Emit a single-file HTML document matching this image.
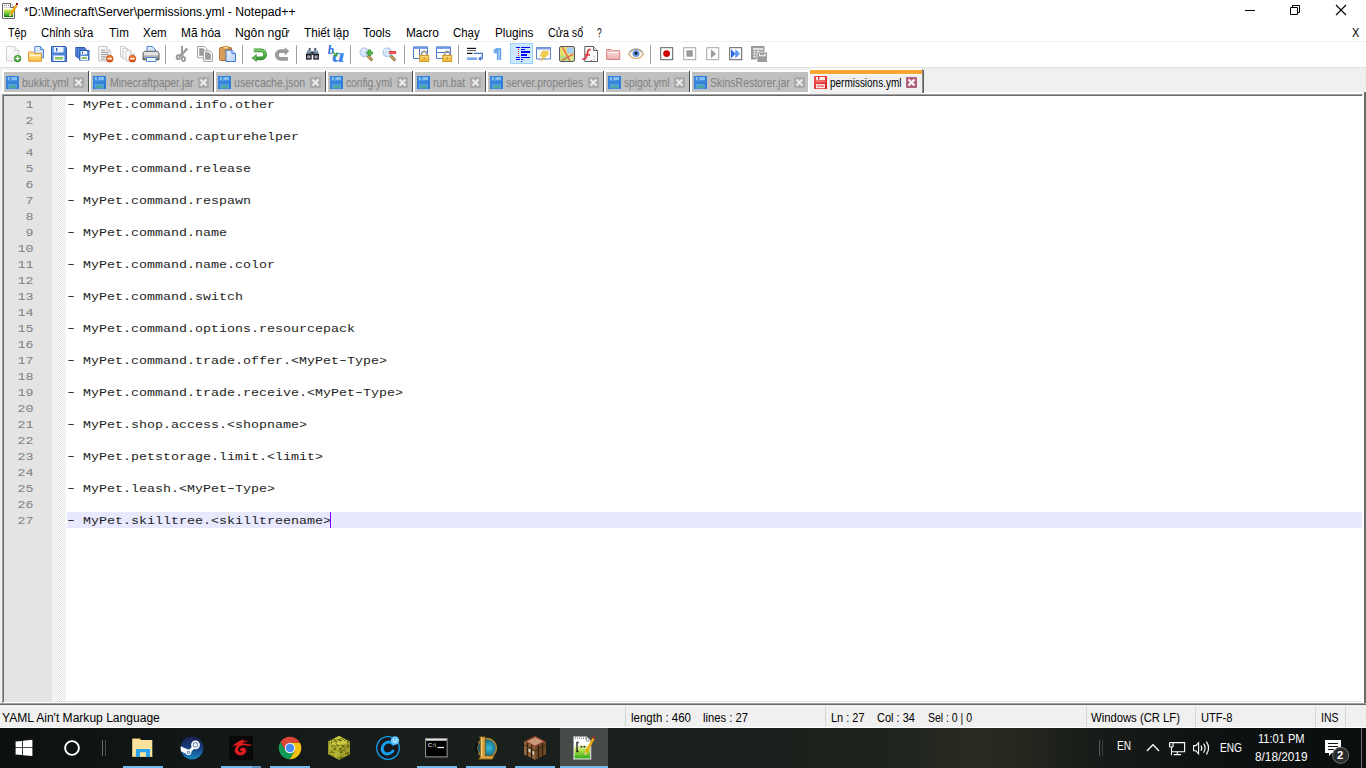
<!DOCTYPE html>
<html lang="vi"><head><meta charset="utf-8"><title>permissions.yml - Notepad++</title>
<style>
html,body{margin:0;padding:0}
body{width:1366px;height:768px;position:relative;overflow:hidden;background:#fff;font:12px "Liberation Sans",sans-serif}
.a{position:absolute}
.tx{position:absolute;white-space:pre;line-height:normal;transform-origin:0 0;display:block}
svg{position:absolute;overflow:visible}
.ln{position:absolute;left:4px;width:29.5px;text-align:right;font:13.33px "Liberation Mono",monospace;color:#808080;height:16px;line-height:16px;white-space:pre;transform:translateY(1px) scaleY(.88);transform-origin:0 11px}
.cl{position:absolute;left:67px;font:13.33px "Liberation Mono",monospace;color:#1e1e1e;height:16px;line-height:16px;white-space:pre;transform:translateY(1px) scaleY(.88);transform-origin:0 11px}
.hy{display:inline-block;transform:translateY(-.6px) scaleX(1.5)}
</style></head><body>
<svg style="left:0px;top:0px" width="20" height="20" viewBox="0 0 20 20"><defs><linearGradient id="tg" x1="0" y1="0" x2="0" y2="1"><stop offset="0" stop-color="#e4f05a"/><stop offset=".6" stop-color="#5cc030"/><stop offset=".85" stop-color="#2a9a1a"/><stop offset="1" stop-color="#0a5a0a"/></linearGradient></defs><path d="M2.500 3.500h8l4 4v11h-12z" fill="#fff" stroke="#666" stroke-width="1"/><path d="M10.500 3.500v4h4" fill="#f4f4f4" stroke="#666"/><path d="M4 5.500h1M6 5.500h1M8 5.500h1" stroke="#777" stroke-width="1"/><path d="M4 7.500h6" stroke="#c9d9ea"/><rect x="4" y="9.300" width="9.200" height="7.700" fill="url(#tg)"/><path d="M16.500 5.500l-6.300 9.500" stroke="#f1a500" stroke-width="2.300"/><path d="M10.900 13.900l-1.400 2.100" stroke="#e9c79a" stroke-width="2"/><path d="M16.200 4.200l1.100 .8" stroke="#8a9ab8" stroke-width="2.200"/><rect x="16" y="3" width="2" height="1.900" fill="#9a0000"/></svg>
<svg style="left:1240px;top:0" width="126" height="22" viewBox="0 0 126 22"><path d="M5 10.5h10" stroke="#000" stroke-width="1" fill="none"/><path d="M50.5 7.500h7v7h-7zM52.500 7.500v-2h7v7h-2" stroke="#000" stroke-width="1" fill="none"/><path d="M96 5l10 10M106 5l-10 10" stroke="#000" stroke-width="1.1" fill="none"/></svg>
<div class="a" style="left:0px;top:41px;width:1366px;height:1px;background:#f0f0f0;"></div>
<div class="a" style="left:0px;top:67px;width:1366px;height:1px;background:#e1e1e1;"></div>
<div class="a" style="left:0px;top:68px;width:1366px;height:25px;background:#f0f0f0;"></div>
<svg width="0" height="0" style="left:0;top:0"><defs><linearGradient id="gpg" x1="0" y1="0" x2="1" y2="1"><stop offset="0" stop-color="#fff"/><stop offset="1" stop-color="#ececec"/></linearGradient><linearGradient id="gfo" x1="0" y1="0" x2="0" y2="1"><stop offset="0" stop-color="#fdedb4"/><stop offset="1" stop-color="#f8c445"/></linearGradient><linearGradient id="gdoc" x1="0" y1="0" x2="1" y2="1"><stop offset="0" stop-color="#eaf2fe"/><stop offset="1" stop-color="#b9d0f5"/></linearGradient><linearGradient id="gsv" x1="0" y1="0" x2="1" y2="1"><stop offset="0" stop-color="#78a6ec"/><stop offset="1" stop-color="#3f72cc"/></linearGradient><linearGradient id="ggr" x1="0" y1="0" x2="0" y2="1"><stop offset="0" stop-color="#6cc24e"/><stop offset="1" stop-color="#2f8a22"/></linearGradient><linearGradient id="gor" x1="0" y1="0" x2="0" y2="1"><stop offset="0" stop-color="#f58a3a"/><stop offset="1" stop-color="#dc4a10"/></linearGradient><linearGradient id="gpr" x1="0" y1="0" x2="0" y2="1"><stop offset="0" stop-color="#f2f2f2"/><stop offset=".55" stop-color="#bdbdbd"/><stop offset="1" stop-color="#6a6a6a"/></linearGradient><linearGradient id="gcl" x1="0" y1="0" x2="1" y2="0"><stop offset="0" stop-color="#e2a866"/><stop offset="1" stop-color="#c98238"/></linearGradient><linearGradient id="gun" x1="0" y1="0" x2="0" y2="1"><stop offset="0" stop-color="#7acb6a"/><stop offset="1" stop-color="#3f9a38"/></linearGradient><linearGradient id="glk" x1="0" y1="0" x2="0" y2="1"><stop offset="0" stop-color="#fbdc7c"/><stop offset="1" stop-color="#eeb030"/></linearGradient><linearGradient id="gfw" x1="0" y1="0" x2="0" y2="1"><stop offset="0" stop-color="#fbe4e4"/><stop offset="1" stop-color="#eeb0b0"/></linearGradient><linearGradient id="gbl" x1="0" y1="0" x2="1" y2="0"><stop offset="0" stop-color="#1f5fe0"/><stop offset="1" stop-color="#7fb0f8"/></linearGradient></defs></svg>
<svg style="left:5px;top:46px" width="16" height="16" viewBox="0 0 16 16"><path d="M1.5 0.5h8.5l4 4v10.5h-12.5z" fill="url(#gpg)" stroke="#d2d2d2"/><path d="M10.0 0.5v4h4" fill="#f4f4f4" stroke="#d2d2d2" stroke-linejoin="round"/><circle cx="12.600" cy="12.600" r="3.300" fill="url(#ggr)" stroke="#2d7d22" stroke-width=".7"/><path d="M10.600 12.600h4M12.600 10.600v4" stroke="#fff" stroke-width="1.400"/></svg>
<svg style="left:28px;top:46px" width="16" height="16" viewBox="0 0 16 16"><path d="M6.800 .5h5.700l3 3v8.500h-8.700z" fill="url(#gdoc)" stroke="#4f84d4"/><path d="M12.500 .5v3h3" fill="#dbe8fb" stroke="#4f84d4" stroke-linejoin="round"/><path d="M.7 15.200v-9.200h4.800l1 1.500h7v7.700z" fill="url(#gfo)" stroke="#e4922a"/><path d="M1.500 9.500h11.500" stroke="#fff6d6" opacity=".9"/></svg>
<svg style="left:51px;top:46px" width="16" height="16" viewBox="0 0 16 16"><path d="M.5 .5h14l1 1v14h-15z" fill="url(#gsv)" stroke="#2d5cb4"/><rect x="3" y="1" width="9.500" height="5.500" fill="#eef4fd"/><rect x="5" y="2" width="1.300" height="3.300" fill="#2d5cb4"/><rect x="1" y="6.800" width="14" height="2.200" fill="#4a7fd6" opacity=".7"/><rect x="2.500" y="9.500" width="11" height="5.500" fill="#f3f7fd"/><rect x="4" y="11" width="8" height="2.500" fill="#7cc04e"/><path d="M4 12.200h8" stroke="#a6d986" stroke-width=".6"/></svg>
<svg style="left:74px;top:46px" width="16" height="16" viewBox="0 0 16 16"><rect x="1.8" y="1.5" width="8.7" height="8.7" fill="url(#gsv)" stroke="#2f5fb5"/><rect x="3.3" y="3.0" width="8.7" height="8.7" fill="url(#gsv)" stroke="#2f5fb5"/><rect x="5.5" y="4.5" width="9.5" height="9.5" fill="url(#gsv)" stroke="#2f5fb5"/><rect x="7" y="5" width="6" height="3.400" fill="#eef4fd"/><rect x="8" y="5.500" width="1" height="2.200" fill="#2d5cb4"/><rect x="6.500" y="10" width="7.500" height="4" fill="#f3f7fd"/><rect x="7.800" y="11.200" width="5" height="1.800" fill="#7cc04e"/></svg>
<svg style="left:97px;top:46px" width="16" height="16" viewBox="0 0 16 16"><path d="M1.7 0.5h8l4 4v10.5h-12z" fill="url(#gpg)" stroke="#c4c4c4"/><path d="M9.7 0.5v4h4" fill="#f4f4f4" stroke="#c4c4c4" stroke-linejoin="round"/><path d="M4 4.200h4M4 6.400h7.500M4 8.600h7.500M4 10.800h5M4 13h4" stroke="#8a8a8a" stroke-width=".9"/><circle cx="12.7" cy="12.7" r="3.400" fill="url(#gor)" stroke="#c2440e" stroke-width=".7"/><path d="M10.5 12.7h4.400" stroke="#fff" stroke-width="1.500"/></svg>
<svg style="left:120px;top:46px" width="16" height="16" viewBox="0 0 16 16"><path d="M0.5 0.5h4.5l4 4v6.5h-8.5z" fill="url(#gpg)" stroke="#cdcdcd"/><path d="M5.0 0.5v4h4" fill="#f4f4f4" stroke="#cdcdcd" stroke-linejoin="round"/><path d="M3.0 2.5h4.5l4 4v6.5h-8.5z" fill="url(#gpg)" stroke="#cdcdcd"/><path d="M7.5 2.5v4h4" fill="#f4f4f4" stroke="#cdcdcd" stroke-linejoin="round"/><path d="M6.0 4.5h4.5l4 4v6.5h-8.5z" fill="url(#gpg)" stroke="#cdcdcd"/><path d="M10.5 4.5v4h4" fill="#f4f4f4" stroke="#cdcdcd" stroke-linejoin="round"/><circle cx="12.4" cy="12.7" r="3.400" fill="url(#gor)" stroke="#c2440e" stroke-width=".7"/><path d="M10.2 12.7h4.400" stroke="#fff" stroke-width="1.500"/></svg>
<svg style="left:143px;top:46px" width="16" height="16" viewBox="0 0 16 16"><path d="M4 .5h5.500l3 3v4h-8.500z" fill="url(#gdoc)" stroke="#4f84d4"/><path d="M1.500 5.300h13l1.500 2v6.500h-16v-6.500z" fill="url(#gpr)" stroke="#4a4a4a" stroke-width=".9"/><path d="M1 8.200h14" stroke="#fff" opacity=".7"/><path d="M3.500 11.500h9.500v4h-9.500z" fill="#f4f8fe" stroke="#4f84d4"/></svg>
<div class="a" style="left:165px;top:45px;width:1px;height:19px;background:#a0a0a0;"></div>
<svg style="left:174px;top:46px" width="16" height="16" viewBox="0 0 16 16"><path d="M8 0v9.500" stroke="#9b9b9b" stroke-width="2" fill="none"/><path d="M13.300 2.500L7.300 9.300" stroke="#9b9b9b" stroke-width="2.300" fill="none"/><path d="M8.500 8l-3 1.500M8 9l1 2.500" stroke="#9b9b9b" stroke-width="2.400" fill="none"/><ellipse cx="4.300" cy="11.200" rx="1.600" ry="1.900" fill="none" stroke="#9b9b9b" stroke-width="1.900"/><ellipse cx="9.500" cy="13" rx="1.600" ry="2.100" fill="none" stroke="#9b9b9b" stroke-width="1.900"/></svg>
<svg style="left:197px;top:46px" width="16" height="16" viewBox="0 0 16 16"><path d="M.5 .5h7l2.500 2.500v8.800h-9.500z" fill="#fff" stroke="#a2a2a2"/><path d="M2.200 2.300h4l1.700 1.700v5.700h-5.700z" fill="#9b9b9b"/><path d="M6.700 4.800h6.200l2.500 2.500v8.100h-8.700z" fill="#fff" stroke="#a2a2a2"/><path d="M8.100 6.200h3.700l2 2v5.500h-5.700z" fill="#9b9b9b"/></svg>
<svg style="left:220px;top:46px" width="16" height="16" viewBox="0 0 16 16"><rect x="-.4" y="1.500" width="12" height="13" rx="1.200" fill="url(#gcl)" stroke="#a8641c" stroke-width=".9"/><rect x="3" y=".3" width="5.500" height="2.800" rx=".6" fill="#f4d48a" stroke="#b97a24" stroke-width=".7"/><path d="M6 4.200h6l3.500 3.500v7.800h-9.500z" fill="url(#gdoc)" stroke="#3f78d6"/><path d="M12 4.200v3.500h3.500" fill="#e6effd" stroke="#3f78d6" stroke-linejoin="round"/></svg>
<div class="a" style="left:242px;top:45px;width:1px;height:19px;background:#a0a0a0;"></div>
<svg style="left:251px;top:46px" width="16" height="16" viewBox="0 0 16 16"><path d="M2.800 4.400h7.400a4 4 0 0 1 0 8h-5.500" fill="none" stroke="#3b8c35" stroke-width="3.600"/><path d="M5.600 8v8l-5-4z" fill="#3b8c35"/><path d="M2.800 4.400h7.400a4 4 0 0 1 0 8h-5.500" fill="none" stroke="url(#gun)" stroke-width="2.400"/><path d="M5 9.300v5.400l-3.400-2.700z" fill="#63bb55"/></svg>
<svg style="left:274px;top:46px" width="16" height="16" viewBox="0 0 16 16"><path d="M13.900 12.800h-7.300a3.800 3.800 0 0 1 0-7.600h4.600" fill="none" stroke="#9b9b9b" stroke-width="3.800"/><path d="M10.800 1v8.400l4.400-4.200z" fill="#9b9b9b"/></svg>
<div class="a" style="left:296px;top:45px;width:1px;height:19px;background:#a0a0a0;"></div>
<svg style="left:305px;top:46px" width="16" height="16" viewBox="0 0 16 16"><rect x="3.700" y="1.900" width="1.900" height="2.800" fill="#4a5567"/><rect x="9.300" y="1.900" width="1.900" height="2.800" fill="#4a5567"/><path d="M2.300 4.800q2.400-1.300 4.700 .4h1q2.300-1.700 4.700-.4l1.200 3.700h-12.900z" fill="#66768f"/><path d="M2.800 5.800q2-1 3.800 .2M8.600 6q1.800-1.200 3.800-.2" stroke="#a9b6c9" stroke-width=".8" fill="none"/><rect x="6.300" y="6" width="2.400" height="3" fill="#2f3745"/><rect x="1" y="8" width="5.600" height="5.600" fill="#14171d"/><rect x="8.300" y="8" width="5.600" height="5.600" fill="#14171d"/><rect x="2.300" y="9.500" width="3" height="2.800" fill="#c2c7cf"/><rect x="9.600" y="9.500" width="3" height="2.800" fill="#c2c7cf"/><path d="M3.800 9.500v2.800M11.100 9.500v2.800" stroke="#7f8896" stroke-width=".8"/></svg>
<svg style="left:328px;top:46px" width="16" height="16" viewBox="0 0 16 16"><text x="-.3" y="7.700" font-family="Liberation Serif,serif" font-style="italic" font-weight="700" font-size="12.500" fill="#2a6ae0">b</text><text transform="translate(4.300 15.500) scale(1.350 1)" font-family="Liberation Serif,serif" font-style="italic" font-weight="700" font-size="18" fill="#3c84ea">a</text><path d="M4.800 6l3.700 3.500M8.800 6.300v3.500h-3.500" stroke="#3fa64a" stroke-width="1.400" fill="none"/></svg>
<div class="a" style="left:350px;top:45px;width:1px;height:19px;background:#a0a0a0;"></div>
<svg style="left:359px;top:46px" width="16" height="16" viewBox="0 0 16 16"><path d="M9 10l3.300 3.600" stroke="#7a5a2a" stroke-width="3" stroke-linecap="round"/><path d="M9.200 10.200l3.100 3.400" stroke="#d2a866" stroke-width="1.600" stroke-linecap="round"/><circle cx="5.200" cy="6.300" r="4.200" fill="#d6e5fa" stroke="#a9c3ea" stroke-width="1.100"/><path d="M2.500 5a3 3 0 0 1 3-2" stroke="#fff" stroke-width="1" fill="none"/><path d="M7.300 6.800h6.600M10.600 3.500v6.600" stroke="#2f8a2f" stroke-width="2.800"/><path d="M7.800 6.800h5.600M10.600 4v5.600" stroke="#58b84e" stroke-width="1.500"/></svg>
<svg style="left:382px;top:46px" width="16" height="16" viewBox="0 0 16 16"><path d="M9 10l3.300 3.600" stroke="#7a5a2a" stroke-width="3" stroke-linecap="round"/><path d="M9.200 10.200l3.100 3.400" stroke="#d2a866" stroke-width="1.600" stroke-linecap="round"/><circle cx="5.200" cy="6.300" r="4.200" fill="#d6e5fa" stroke="#a9c3ea" stroke-width="1.100"/><path d="M2.500 5a3 3 0 0 1 3-2" stroke="#fff" stroke-width="1" fill="none"/><rect x="7.100" y="5" width="7" height="2.800" fill="#e32626"/><path d="M7.600 6.200h6" stroke="#f58a8a" stroke-width=".8"/></svg>
<div class="a" style="left:404px;top:45px;width:1px;height:19px;background:#a0a0a0;"></div>
<svg style="left:413px;top:46px" width="16" height="16" viewBox="0 0 16 16"><path d="M.5 .9h14v11.600h-14z" fill="#fff" stroke="#4a7ad0"/><path d="M.5 1.900h14" stroke="#6b97e2" stroke-width="2"/><path d="M6.500 3v9.500" stroke="#4a7ad0"/><path d="M8.600 9.500v-1.500a2.600 2.600 0 0 1 5.200 0v1.500" fill="none" stroke="#9c9c9c" stroke-width="1.800"/><rect x="6.700" y="9.500" width="9" height="6" fill="url(#glk)" stroke="#d29a26"/><rect x="10.600" y="11.300" width="1.300" height="2" fill="#c8901e"/></svg>
<svg style="left:436px;top:46px" width="16" height="16" viewBox="0 0 16 16"><path d="M.5 .9h14v11.600h-14z" fill="#fff" stroke="#4a7ad0"/><path d="M.5 1.900h14" stroke="#6b97e2" stroke-width="2"/><path d="M.5 6.500h14" stroke="#4a7ad0"/><path d="M8.600 9.500v-1.500a2.600 2.600 0 0 1 5.200 0v1.500" fill="none" stroke="#9c9c9c" stroke-width="1.800"/><rect x="6.700" y="9.500" width="9" height="6" fill="url(#glk)" stroke="#d29a26"/><rect x="10.600" y="11.300" width="1.300" height="2" fill="#c8901e"/></svg>
<div class="a" style="left:458px;top:45px;width:1px;height:19px;background:#a0a0a0;"></div>
<svg style="left:467px;top:46px" width="16" height="16" viewBox="0 0 16 16"><path d="M0 2.400h9" stroke="#111" stroke-width="1.200"/><path d="M0 4.600h9" stroke="#555" stroke-width="1"/><path d="M0 7.400h5.500" stroke="#111" stroke-width="1.200"/><rect x="0" y="11.400" width="10" height="2.600" fill="#7aa6ea"/><path d="M7 7.400h8.300v5.300h-3" fill="none" stroke="#3a72d2" stroke-width="1.200"/><path d="M13.800 10.300l-2.800 2.400 2.800 2.400z" fill="#3a72d2"/></svg>
<svg style="left:490px;top:46px" width="16" height="16" viewBox="0 0 16 16"><path d="M7.800 2.500v11.500M10.300 2.500v11.500" stroke="#5c9ceb" stroke-width="1.700"/><path d="M7.500 2.400h-1.500a2.600 2.600 0 0 0 0 5.200h1.500z" fill="#76acf0"/><path d="M6 3h5.200" stroke="#5c9ceb" stroke-width="1.300"/></svg>
<div class="a" style="left:510px;top:43px;width:21px;height:19px;background:#cce8ff;border:1px solid #99d1ff"></div>
<svg style="left:513px;top:46px" width="16" height="16" viewBox="0 0 16 16"><path d="M3 1.500h4M8 1.500h9M8 3.500h4M3 11.500h4M8 11.500h9M3 13.500h4M8 13.500h2M8 15.500h1" stroke="#0000ff" stroke-width="1"/><path d="M8 6h9M8 9h6" stroke="#0000ff" stroke-width="2"/><path d="M5 3.500h1M5 5.500h1M5 7.500h1M5 9.500h1" stroke="#ff0000" stroke-width="1"/></svg>
<svg style="left:536px;top:46px" width="16" height="16" viewBox="0 0 16 16"><path d="M.5 1.500h14v11.500h-14z" fill="#fff" stroke="#5a82cc"/><path d="M.5 2.500h14" stroke="#7aa0e4" stroke-width="2"/><path d="M6.500 5h6.500l-2.500 2.500h2.800l-8.500 7.700 2.400-5h-3z" fill="#f3cf52" stroke="#e0b030" stroke-width=".5"/></svg>
<svg style="left:559px;top:46px" width="16" height="16" viewBox="0 0 16 16"><rect x=".5" y=".5" width="15" height="15" rx="1.500" fill="#e9e070" stroke="#55556e"/><rect x="8" y="1.500" width="6.500" height="6" fill="#a6cdf2"/><path d="M1.500 9.500h13v5h-13z" fill="#a9dc86"/><path d="M10 10h4.500v4.500h-4.500z" fill="#d9e58a"/><path d="M3.500 1.200l7.500 13.600M14.500 8l-5.500 3-6 3.500" stroke="#ea5a46" stroke-width="1.300" fill="none"/></svg>
<svg style="left:582px;top:46px" width="16" height="16" viewBox="0 0 16 16"><path d="M2.800 .5h8.700l4 4v11h-12.700z" fill="#fcfcfc" stroke="#5e5e5e"/><path d="M11.500 .5v4h4" fill="#f0f0f0" stroke="#5e5e5e" stroke-linejoin="round"/><path d="M12 9.500v1.500M12 12.500v1.500M8.500 14.500h1.500" stroke="#9a9a9a"/><path d="M8.800 3.800c-3.200-1-3.200 2.700-3.800 5.200s-1.600 4.800-4.600 4" fill="none" stroke="#e0363c" stroke-width="1.700"/><path d="M2.800 8.800h5.200" stroke="#e0363c" stroke-width="1.500"/></svg>
<svg style="left:605px;top:46px" width="16" height="16" viewBox="0 0 16 16"><path d="M1.700 13.500v-10h4.300l1 1.300h7.700v8.700z" fill="url(#gfw)" stroke="#d97878"/><path d="M2.500 6.500h11.500" stroke="#fff" opacity=".8"/><path d="M3 5.300h3" stroke="#e39a9a"/></svg>
<svg style="left:628px;top:46px" width="16" height="16" viewBox="0 0 16 16"><path d="M.5 8c3.500-6.500 11.500-6.500 15 0c-3.500 6-11.500 6-15 0z" fill="#f8f4ec" stroke="#dba468" stroke-width="1.100"/><circle cx="8" cy="7.500" r="3.500" fill="#6d9edc"/><circle cx="8" cy="7.500" r="2.300" fill="#4f82c6"/><circle cx="8" cy="7.200" r="1.300" fill="#111"/><path d="M1.500 6.300c3.300-4.300 9.700-4.300 13 0" fill="none" stroke="#a2a2a2" stroke-width="1.200"/></svg>
<div class="a" style="left:650px;top:45px;width:1px;height:19px;background:#a0a0a0;"></div>
<svg style="left:659px;top:46px" width="16" height="16" viewBox="0 0 16 16"><rect x="1.700" y="1.700" width="12" height="12" fill="#fff" stroke="#5e5e5e"/><circle cx="7.600" cy="7.600" r="3.400" fill="#d10000"/></svg>
<svg style="left:682px;top:46px" width="16" height="16" viewBox="0 0 16 16"><rect x="1.700" y="1.700" width="12" height="12" fill="#fff" stroke="#a6a6a6"/><rect x="4.400" y="4.300" width="6.400" height="6.400" fill="#9b9b9b"/></svg>
<svg style="left:705px;top:46px" width="16" height="16" viewBox="0 0 16 16"><rect x="1.700" y="1.700" width="12" height="12" fill="#fff" stroke="#a6a6a6"/><path d="M6 3.200v9l5-4.500z" fill="#9b9b9b"/></svg>
<svg style="left:728px;top:46px" width="16" height="16" viewBox="0 0 16 16"><rect x="1.700" y="1.700" width="12" height="12" fill="#fff" stroke="#5e5e5e"/><path d="M3 3.200v9l4.800-4.500zM7.400 3.200v9l4.800-4.500z" fill="url(#gbl)"/></svg>
<svg style="left:751px;top:46px" width="16" height="16" viewBox="0 0 16 16"><rect x="0" y="0" width="13.500" height="13.500" fill="#9b9b9b"/><path d="M2 3h10" stroke="#fff" stroke-width="1.400"/><path d="M2.500 5.500h2M6 5.500h2M2.500 8h2M6 8h2M2.500 10.500h2" stroke="#fff" stroke-width="1.300"/><rect x="6" y="6" width="10" height="10" fill="#9b9b9b"/><path d="M6 16v-10h10" fill="none" stroke="#fff" stroke-width=".7"/><path d="M8.500 7.500v2.300h5.500v-2.300" fill="none" stroke="#fff" stroke-width="1.100"/></svg>
<div class="a" style="left:2px;top:70px;width:86px;height:22px;background:#ffffff;border-radius:2px 0 0 0"></div>
<div class="a" style="left:4px;top:72px;width:84px;height:20px;background:#c0c0c0;"></div>
<div class="a" style="left:88px;top:71px;width:1px;height:21px;background:#4c4c4c;"></div>
<svg style="left:6px;top:76px" width="13" height="13" viewBox="0 0 13 13"><defs><linearGradient id="tsb" x1="0" y1="0" x2="1" y2="1"><stop offset="0" stop-color="#4a98ea"/><stop offset="1" stop-color="#1c6cc8"/></linearGradient></defs><rect x="0" y="0" width="13" height="13" fill="url(#tsb)"/><rect x=".5" y=".5" width="12" height="12" fill="none" stroke="#2f80dc" stroke-width="1"/><rect x="2" y="1" width="9" height="3.300" fill="#86bef0"/><rect x="4" y="1" width="1.300" height="2.700" fill="#2a78d4"/><rect x="1.500" y="5.200" width="10" height="2.300" fill="#3a84dc"/><rect x="2" y="8" width="9" height="4.500" fill="#5aa0e8"/><rect x="3" y="9.200" width="7" height="2.800" fill="#4aa8a4"/></svg>
<svg style="left:73px;top:77px" width="11" height="11" viewBox="0 0 11 11"><rect x="0" y="0" width="11" height="11" rx="1.500" fill="#a9a9a9"/><path d="M2.500 2.500l6 6M8.500 2.500l-6 6" stroke="#ececec" stroke-width="2"/></svg>
<div class="a" style="left:89px;top:70px;width:124px;height:22px;background:#ffffff;border-radius:2px 0 0 0"></div>
<div class="a" style="left:91px;top:72px;width:122px;height:20px;background:#c0c0c0;"></div>
<div class="a" style="left:213px;top:71px;width:1px;height:21px;background:#4c4c4c;"></div>
<svg style="left:93px;top:76px" width="13" height="13" viewBox="0 0 13 13"><defs><linearGradient id="tsb" x1="0" y1="0" x2="1" y2="1"><stop offset="0" stop-color="#4a98ea"/><stop offset="1" stop-color="#1c6cc8"/></linearGradient></defs><rect x="0" y="0" width="13" height="13" fill="url(#tsb)"/><rect x=".5" y=".5" width="12" height="12" fill="none" stroke="#2f80dc" stroke-width="1"/><rect x="2" y="1" width="9" height="3.300" fill="#86bef0"/><rect x="4" y="1" width="1.300" height="2.700" fill="#2a78d4"/><rect x="1.500" y="5.200" width="10" height="2.300" fill="#3a84dc"/><rect x="2" y="8" width="9" height="4.500" fill="#5aa0e8"/><rect x="3" y="9.200" width="7" height="2.800" fill="#4aa8a4"/></svg>
<svg style="left:198px;top:77px" width="11" height="11" viewBox="0 0 11 11"><rect x="0" y="0" width="11" height="11" rx="1.500" fill="#a9a9a9"/><path d="M2.500 2.500l6 6M8.500 2.500l-6 6" stroke="#ececec" stroke-width="2"/></svg>
<div class="a" style="left:214px;top:70px;width:111px;height:22px;background:#ffffff;border-radius:2px 0 0 0"></div>
<div class="a" style="left:216px;top:72px;width:109px;height:20px;background:#c0c0c0;"></div>
<div class="a" style="left:325px;top:71px;width:1px;height:21px;background:#4c4c4c;"></div>
<svg style="left:218px;top:76px" width="13" height="13" viewBox="0 0 13 13"><defs><linearGradient id="tsb" x1="0" y1="0" x2="1" y2="1"><stop offset="0" stop-color="#4a98ea"/><stop offset="1" stop-color="#1c6cc8"/></linearGradient></defs><rect x="0" y="0" width="13" height="13" fill="url(#tsb)"/><rect x=".5" y=".5" width="12" height="12" fill="none" stroke="#2f80dc" stroke-width="1"/><rect x="2" y="1" width="9" height="3.300" fill="#86bef0"/><rect x="4" y="1" width="1.300" height="2.700" fill="#2a78d4"/><rect x="1.500" y="5.200" width="10" height="2.300" fill="#3a84dc"/><rect x="2" y="8" width="9" height="4.500" fill="#5aa0e8"/><rect x="3" y="9.200" width="7" height="2.800" fill="#4aa8a4"/></svg>
<svg style="left:310px;top:77px" width="11" height="11" viewBox="0 0 11 11"><rect x="0" y="0" width="11" height="11" rx="1.500" fill="#a9a9a9"/><path d="M2.500 2.500l6 6M8.500 2.500l-6 6" stroke="#ececec" stroke-width="2"/></svg>
<div class="a" style="left:326px;top:70px;width:86px;height:22px;background:#ffffff;border-radius:2px 0 0 0"></div>
<div class="a" style="left:328px;top:72px;width:84px;height:20px;background:#c0c0c0;"></div>
<div class="a" style="left:412px;top:71px;width:1px;height:21px;background:#4c4c4c;"></div>
<svg style="left:330px;top:76px" width="13" height="13" viewBox="0 0 13 13"><defs><linearGradient id="tsb" x1="0" y1="0" x2="1" y2="1"><stop offset="0" stop-color="#4a98ea"/><stop offset="1" stop-color="#1c6cc8"/></linearGradient></defs><rect x="0" y="0" width="13" height="13" fill="url(#tsb)"/><rect x=".5" y=".5" width="12" height="12" fill="none" stroke="#2f80dc" stroke-width="1"/><rect x="2" y="1" width="9" height="3.300" fill="#86bef0"/><rect x="4" y="1" width="1.300" height="2.700" fill="#2a78d4"/><rect x="1.500" y="5.200" width="10" height="2.300" fill="#3a84dc"/><rect x="2" y="8" width="9" height="4.500" fill="#5aa0e8"/><rect x="3" y="9.200" width="7" height="2.800" fill="#4aa8a4"/></svg>
<svg style="left:397px;top:77px" width="11" height="11" viewBox="0 0 11 11"><rect x="0" y="0" width="11" height="11" rx="1.500" fill="#a9a9a9"/><path d="M2.500 2.500l6 6M8.500 2.500l-6 6" stroke="#ececec" stroke-width="2"/></svg>
<div class="a" style="left:413px;top:70px;width:72px;height:22px;background:#ffffff;border-radius:2px 0 0 0"></div>
<div class="a" style="left:415px;top:72px;width:70px;height:20px;background:#c0c0c0;"></div>
<div class="a" style="left:485px;top:71px;width:1px;height:21px;background:#4c4c4c;"></div>
<svg style="left:417px;top:76px" width="13" height="13" viewBox="0 0 13 13"><defs><linearGradient id="tsb" x1="0" y1="0" x2="1" y2="1"><stop offset="0" stop-color="#4a98ea"/><stop offset="1" stop-color="#1c6cc8"/></linearGradient></defs><rect x="0" y="0" width="13" height="13" fill="url(#tsb)"/><rect x=".5" y=".5" width="12" height="12" fill="none" stroke="#2f80dc" stroke-width="1"/><rect x="2" y="1" width="9" height="3.300" fill="#86bef0"/><rect x="4" y="1" width="1.300" height="2.700" fill="#2a78d4"/><rect x="1.500" y="5.200" width="10" height="2.300" fill="#3a84dc"/><rect x="2" y="8" width="9" height="4.500" fill="#5aa0e8"/><rect x="3" y="9.200" width="7" height="2.800" fill="#4aa8a4"/></svg>
<svg style="left:470px;top:77px" width="11" height="11" viewBox="0 0 11 11"><rect x="0" y="0" width="11" height="11" rx="1.500" fill="#a9a9a9"/><path d="M2.500 2.500l6 6M8.500 2.500l-6 6" stroke="#ececec" stroke-width="2"/></svg>
<div class="a" style="left:486px;top:70px;width:117px;height:22px;background:#ffffff;border-radius:2px 0 0 0"></div>
<div class="a" style="left:488px;top:72px;width:115px;height:20px;background:#c0c0c0;"></div>
<div class="a" style="left:603px;top:71px;width:1px;height:21px;background:#4c4c4c;"></div>
<svg style="left:490px;top:76px" width="13" height="13" viewBox="0 0 13 13"><defs><linearGradient id="tsb" x1="0" y1="0" x2="1" y2="1"><stop offset="0" stop-color="#4a98ea"/><stop offset="1" stop-color="#1c6cc8"/></linearGradient></defs><rect x="0" y="0" width="13" height="13" fill="url(#tsb)"/><rect x=".5" y=".5" width="12" height="12" fill="none" stroke="#2f80dc" stroke-width="1"/><rect x="2" y="1" width="9" height="3.300" fill="#86bef0"/><rect x="4" y="1" width="1.300" height="2.700" fill="#2a78d4"/><rect x="1.500" y="5.200" width="10" height="2.300" fill="#3a84dc"/><rect x="2" y="8" width="9" height="4.500" fill="#5aa0e8"/><rect x="3" y="9.200" width="7" height="2.800" fill="#4aa8a4"/></svg>
<svg style="left:588px;top:77px" width="11" height="11" viewBox="0 0 11 11"><rect x="0" y="0" width="11" height="11" rx="1.500" fill="#a9a9a9"/><path d="M2.500 2.500l6 6M8.500 2.500l-6 6" stroke="#ececec" stroke-width="2"/></svg>
<div class="a" style="left:604px;top:70px;width:85px;height:22px;background:#ffffff;border-radius:2px 0 0 0"></div>
<div class="a" style="left:606px;top:72px;width:83px;height:20px;background:#c0c0c0;"></div>
<div class="a" style="left:689px;top:71px;width:1px;height:21px;background:#4c4c4c;"></div>
<svg style="left:608px;top:76px" width="13" height="13" viewBox="0 0 13 13"><defs><linearGradient id="tsb" x1="0" y1="0" x2="1" y2="1"><stop offset="0" stop-color="#4a98ea"/><stop offset="1" stop-color="#1c6cc8"/></linearGradient></defs><rect x="0" y="0" width="13" height="13" fill="url(#tsb)"/><rect x=".5" y=".5" width="12" height="12" fill="none" stroke="#2f80dc" stroke-width="1"/><rect x="2" y="1" width="9" height="3.300" fill="#86bef0"/><rect x="4" y="1" width="1.300" height="2.700" fill="#2a78d4"/><rect x="1.500" y="5.200" width="10" height="2.300" fill="#3a84dc"/><rect x="2" y="8" width="9" height="4.500" fill="#5aa0e8"/><rect x="3" y="9.200" width="7" height="2.800" fill="#4aa8a4"/></svg>
<svg style="left:674px;top:77px" width="11" height="11" viewBox="0 0 11 11"><rect x="0" y="0" width="11" height="11" rx="1.500" fill="#a9a9a9"/><path d="M2.500 2.500l6 6M8.500 2.500l-6 6" stroke="#ececec" stroke-width="2"/></svg>
<div class="a" style="left:690px;top:70px;width:120px;height:22px;background:#ffffff;border-radius:2px 0 0 0"></div>
<div class="a" style="left:692px;top:72px;width:116px;height:20px;background:#c0c0c0;"></div>
<svg style="left:694px;top:76px" width="13" height="13" viewBox="0 0 13 13"><defs><linearGradient id="tsb" x1="0" y1="0" x2="1" y2="1"><stop offset="0" stop-color="#4a98ea"/><stop offset="1" stop-color="#1c6cc8"/></linearGradient></defs><rect x="0" y="0" width="13" height="13" fill="url(#tsb)"/><rect x=".5" y=".5" width="12" height="12" fill="none" stroke="#2f80dc" stroke-width="1"/><rect x="2" y="1" width="9" height="3.300" fill="#86bef0"/><rect x="4" y="1" width="1.300" height="2.700" fill="#2a78d4"/><rect x="1.500" y="5.200" width="10" height="2.300" fill="#3a84dc"/><rect x="2" y="8" width="9" height="4.500" fill="#5aa0e8"/><rect x="3" y="9.200" width="7" height="2.800" fill="#4aa8a4"/></svg>
<svg style="left:794px;top:77px" width="11" height="11" viewBox="0 0 11 11"><rect x="0" y="0" width="11" height="11" rx="1.500" fill="#a9a9a9"/><path d="M2.500 2.500l6 6M8.500 2.500l-6 6" stroke="#ececec" stroke-width="2"/></svg>
<div class="a" style="left:810px;top:68px;width:112px;height:26px;background:#f0f0f0;border-top:2px solid #fff"></div>
<div class="a" style="left:810px;top:70px;width:112px;height:4px;background:#faa632;"></div>
<div class="a" style="left:810px;top:74px;width:112px;height:1px;background:#f7f9fb;"></div>
<div class="a" style="left:922px;top:69px;width:1px;height:24px;background:#8a8a8a;"></div>
<div class="a" style="left:923px;top:70px;width:1px;height:23px;background:#5e5e5e;"></div>
<svg style="left:814px;top:76px" width="13" height="13" viewBox="0 0 13 13"><defs><linearGradient id="tsr" x1="0" y1="0" x2="1" y2="1"><stop offset="0" stop-color="#f25050"/><stop offset="1" stop-color="#d81818"/></linearGradient></defs><rect x="0" y="0" width="13" height="13" rx=".8" fill="url(#tsr)"/><rect x="2" y="1" width="9" height="3.300" fill="#fdeeee"/><rect x="4" y="1" width="1.300" height="2.700" fill="#e02828"/><rect x="1.500" y="5.300" width="10" height="1" fill="#f88"/><rect x="2" y="8" width="9" height="4.300" fill="#fde4e4"/><rect x="3" y="9.200" width="7" height="1.800" fill="#f08a8a"/></svg>
<svg style="left:906px;top:77px" width="11" height="11" viewBox="0 0 11 11"><rect x="0" y="0" width="11" height="11" rx="1" fill="#b1607c"/><path d="M2.500 2.500l6 6M8.500 2.500l-6 6" stroke="#fff" stroke-width="2.100"/></svg>
<div class="a" style="left:0px;top:92px;width:810px;height:2px;background:#ffffff;"></div>
<div class="a" style="left:924px;top:92px;width:440px;height:2px;background:#ffffff;"></div>
<div class="a" style="left:2px;top:94px;width:1361px;height:1px;background:#a0a0a0;"></div>
<div class="a" style="left:2px;top:95px;width:1360px;height:1px;background:#696969;"></div>
<div class="a" style="left:0px;top:93px;width:2px;height:612px;background:#f0f0f0;"></div>
<div class="a" style="left:2px;top:94px;width:1px;height:610px;background:#a0a0a0;"></div>
<div class="a" style="left:3px;top:95px;width:1px;height:608px;background:#696969;"></div>
<div class="a" style="left:1362px;top:96px;width:2px;height:607px;background:#ffffff;"></div>
<div class="a" style="left:1364px;top:92px;width:2px;height:613px;background:#696969;"></div>
<div class="a" style="left:4px;top:701px;width:1358px;height:1px;background:#e3e3e3;"></div>
<div class="a" style="left:3px;top:702px;width:1361px;height:1px;background:#ffffff;"></div>
<div class="a" style="left:0px;top:703px;width:1366px;height:1px;background:#a0a0a0;"></div>
<div class="a" style="left:0px;top:704px;width:1366px;height:1px;background:#696969;"></div>
<div class="a" style="left:4px;top:96px;width:48px;height:605px;background:#e4e4e4;"></div>
<div class="a" style="left:52px;top:96px;width:14px;height:605px;background:#fff;background:conic-gradient(#fff 25%,#e4e4e4 0 50%,#fff 0 75%,#e4e4e4 0) 0 0/2px 2px"></div>
<div class="a" style="left:67px;top:512px;width:1295px;height:16px;background:#e8e8ff;"></div>
<div class="ln" style="top:96px">1</div>
<div class="cl" style="top:96px"><span class="hy">-</span> MyPet.command.info.other</div>
<div class="ln" style="top:112px">2</div>
<div class="ln" style="top:128px">3</div>
<div class="cl" style="top:128px"><span class="hy">-</span> MyPet.command.capturehelper</div>
<div class="ln" style="top:144px">4</div>
<div class="ln" style="top:160px">5</div>
<div class="cl" style="top:160px"><span class="hy">-</span> MyPet.command.release</div>
<div class="ln" style="top:176px">6</div>
<div class="ln" style="top:192px">7</div>
<div class="cl" style="top:192px"><span class="hy">-</span> MyPet.command.respawn</div>
<div class="ln" style="top:208px">8</div>
<div class="ln" style="top:224px">9</div>
<div class="cl" style="top:224px"><span class="hy">-</span> MyPet.command.name</div>
<div class="ln" style="top:240px">10</div>
<div class="ln" style="top:256px">11</div>
<div class="cl" style="top:256px"><span class="hy">-</span> MyPet.command.name.color</div>
<div class="ln" style="top:272px">12</div>
<div class="ln" style="top:288px">13</div>
<div class="cl" style="top:288px"><span class="hy">-</span> MyPet.command.switch</div>
<div class="ln" style="top:304px">14</div>
<div class="ln" style="top:320px">15</div>
<div class="cl" style="top:320px"><span class="hy">-</span> MyPet.command.options.resourcepack</div>
<div class="ln" style="top:336px">16</div>
<div class="ln" style="top:352px">17</div>
<div class="cl" style="top:352px"><span class="hy">-</span> MyPet.command.trade.offer.&lt;MyPet<span class="hy">-</span>Type&gt;</div>
<div class="ln" style="top:368px">18</div>
<div class="ln" style="top:384px">19</div>
<div class="cl" style="top:384px"><span class="hy">-</span> MyPet.command.trade.receive.&lt;MyPet<span class="hy">-</span>Type&gt;</div>
<div class="ln" style="top:400px">20</div>
<div class="ln" style="top:416px">21</div>
<div class="cl" style="top:416px"><span class="hy">-</span> MyPet.shop.access.&lt;shopname&gt;</div>
<div class="ln" style="top:432px">22</div>
<div class="ln" style="top:448px">23</div>
<div class="cl" style="top:448px"><span class="hy">-</span> MyPet.petstorage.limit.&lt;limit&gt;</div>
<div class="ln" style="top:464px">24</div>
<div class="ln" style="top:480px">25</div>
<div class="cl" style="top:480px"><span class="hy">-</span> MyPet.leash.&lt;MyPet<span class="hy">-</span>Type&gt;</div>
<div class="ln" style="top:496px">26</div>
<div class="ln" style="top:512px">27</div>
<div class="cl" style="top:512px"><span class="hy">-</span> MyPet.skilltree.&lt;skilltreename&gt;</div>
<div class="a" style="left:330px;top:512px;width:1px;height:16px;background:#8000ff;"></div>
<div class="a" style="left:0px;top:705px;width:1366px;height:22px;background:#f0f0f0;"></div>
<div class="a" style="left:0px;top:727px;width:1366px;height:1px;background:#ffffff;"></div>
<div class="a" style="left:625px;top:707px;width:1px;height:20px;background:#d4d4d4;"></div>
<div class="a" style="left:825px;top:707px;width:1px;height:20px;background:#d4d4d4;"></div>
<div class="a" style="left:1086px;top:707px;width:1px;height:20px;background:#d4d4d4;"></div>
<div class="a" style="left:1195px;top:707px;width:1px;height:20px;background:#d4d4d4;"></div>
<div class="a" style="left:1315px;top:707px;width:1px;height:20px;background:#d4d4d4;"></div>
<div class="a" style="left:1345px;top:707px;width:1px;height:20px;background:#d4d4d4;"></div>
<div class="a" style="left:0px;top:728px;width:1366px;height:40px;background:#0e1011;background:linear-gradient(90deg,#0d1011 0%,#101515 10%,#151b18 22%,#191f1b 34%,#1b211c 46%,#1b211c 58%,#1f241d 66%,#282b21 71%,#26291f 74%,#181c18 80%,#0f1213 88%,#0b0e0f 100%)"></div>
<div class="a" style="left:560px;top:728px;width:48px;height:40px;background:#474b48;"></div>
<div class="a" style="left:123px;top:766px;width:40px;height:2px;background:#76b9ed;"></div>
<div class="a" style="left:221px;top:766px;width:40px;height:2px;background:#76b9ed;"></div>
<div class="a" style="left:270px;top:766px;width:40px;height:2px;background:#76b9ed;"></div>
<div class="a" style="left:417px;top:766px;width:40px;height:2px;background:#76b9ed;"></div>
<div class="a" style="left:466px;top:766px;width:40px;height:2px;background:#76b9ed;"></div>
<div class="a" style="left:515px;top:766px;width:40px;height:2px;background:#76b9ed;"></div>
<div class="a" style="left:252px;top:766px;width:9px;height:2px;background:#5e93c2;"></div>
<div class="a" style="left:560px;top:766px;width:48px;height:2px;background:#76b9ed;"></div>
<svg style="left:12px;top:736px" width="24" height="24" viewBox="0 0 24 24"><path d="M3.600 5.600L10 4.900V11.300H3.600zM10.800 4.800L20.400 3.800V11.300H10.800zM3.600 12.100H10V19.100L3.600 18.500zM10.800 12.100H20.400V20L10.800 19.150z" fill="#fff"/></svg>
<svg style="left:60px;top:736px" width="24" height="24" viewBox="0 0 24 24"><circle cx="12" cy="12" r="6.900" fill="none" stroke="#fff" stroke-width="1.900"/></svg>
<svg style="left:131px;top:736px" width="24" height="24" viewBox="0 0 24 24"><path d="M1.200 2.600h8l1.200 1.800h-9.200z" fill="#f2c14a"/><path d="M1.200 4h20.100v16.900h-20.100z" fill="#fbe29c"/><path d="M2.200 3.200h5.500v.8h-5.500z" fill="#fff5cf"/><path d="M4.900 12.900h14.100v8h-4.100v-4.600h-5.900v4.600h-4.100z" fill="#2aa3ea"/><path d="M1.200 20.200h3.700v.7h-3.700zM19 20.200h2.300v.7h-2.300z" fill="#e8b84a"/></svg>
<svg style="left:180px;top:736px" width="24" height="24" viewBox="0 0 24 24"><defs><linearGradient id="sg" x1="0" y1="0" x2="0" y2="1"><stop offset="0" stop-color="#1b1f52"/><stop offset=".5" stop-color="#18407e"/><stop offset="1" stop-color="#1a86c2"/></linearGradient><clipPath id="sc"><circle cx="12" cy="12" r="11.400"/></clipPath></defs><circle cx="12" cy="12" r="11.400" fill="url(#sg)"/><g clip-path="url(#sc)"><path d="M-1 9.500l9.500 4.300-1.200 4.400-8.300-3.500z" fill="#fff"/><path d="M13 11.800l-3.200 3.400" stroke="#fff" stroke-width="3" stroke-linecap="round"/></g><circle cx="15.500" cy="8.800" r="4.400" fill="#fff"/><circle cx="15.500" cy="8.800" r="2.800" fill="#6c84b6"/><circle cx="15.500" cy="8.800" r="1.900" fill="#e9eef7"/><circle cx="8.500" cy="16.200" r="2.800" fill="#fff"/><circle cx="8.500" cy="16.200" r="1.500" fill="#3a6aa8"/><circle cx="8.500" cy="16.200" r=".8" fill="#fff"/></svg>
<svg style="left:229px;top:736px" width="24" height="24" viewBox="0 0 24 24"><rect x="0" y="0" width="24" height="24" rx="2" fill="#080808"/><path d="M14 3.500c-3.500 1-7 3-10.500 7 2-.8 3.500-1 5-1-3.500 2.500-3.500 6.500-1 8.500 3 2.400 8 1.500 9.500-2 .8-2-.3-4-2.500-4.500-2-.4-3.800 1-3.300 2.800.3 1 1.500 1.500 2.500 1-.3 .8-1.500 1.300-2.600 .9-2.200-.8-2.600-3.600-.9-5.200 1.800-1.700 5-2 7.800-1.300 2 .5 3.500 .3 5-1.200-2-.2-4 .1-5.500-.6-1.500-.7-3.200-.5-4.500 0 1.700-1.600 4-2.400 6.500-2.600-1.800-.6-4-.6-6 0 .8-.8 1.500-1.400 1-1.800z" fill="#e01b22"/></svg>
<svg style="left:278px;top:736px" width="24" height="24" viewBox="0 0 24 24"><path d="M7.410 14.650L2.420 6.010A11.300 11.300 0 0 1 21.980 6.700L12 6.700z" fill="#dc4437"/><path d="M12 6.700L21.980 6.700A11.300 11.300 0 0 1 11.600 23.290L16.590 14.650z" fill="#f6c313"/><path d="M16.590 14.650L11.600 23.290A11.300 11.300 0 0 1 2.420 6.010L7.410 14.650z" fill="#109d59"/><path d="M12 6.700L21.980 6.700L21 5.200z" fill="#b93a2e" opacity=".35"/><circle cx="12" cy="12" r="5.250" fill="#f4f4f4"/><circle cx="12" cy="12" r="4.200" fill="#4a8af5"/></svg>
<svg style="left:327px;top:736px" width="24" height="24" viewBox="0 0 24 24"><defs><clipPath id="spc"><path d="M12 0l10.800 5.500v12.700l-10.800 5.500-10.800-5.500v-12.700z"/></clipPath></defs><path d="M12 0l10.800 5.500v12.700l-10.800 5.500-10.800-5.500v-12.700z" fill="#b4b432"/><path d="M12 0l10.800 5.500-10.800 5.500-10.800-5.500z" fill="#cccc42"/><path d="M12 11v12.700l10.800-5.500v-12.700z" fill="#a0a02a"/><path clip-path="url(#spc)" d="M8.1 4.3h1v1h-1zM18.3 3.1h1v1.5h-1zM5.9 2.9h2v1h-2zM6.4 13.1h1v1.5h-1zM4.0 5.9h1v1.5h-1zM13.5 2.1h1v1h-1zM12.9 3.9h2v1h-2zM12.6 13.6h1v1h-1zM13.4 15.1h1.5v1h-1.5zM12.7 2.4h1v1.5h-1zM5.7 16.0h2v1h-2zM11.0 21.3h1.5v1h-1.5zM6.6 5.0h1v1h-1zM13.3 12.6h1.5v1.5h-1.5zM10.7 14.4h1v1h-1zM12.0 4.6h1.5v1h-1.5zM20.6 10.3h1v1.5h-1zM13.2 20.3h1.5v1h-1.5zM15.8 14.1h2v1h-2zM18.7 21.8h2v1.5h-2zM15.1 2.3h1.5v1.5h-1.5zM13.3 16.0h2v1h-2zM16.2 20.5h1.5v1h-1.5zM20.8 8.8h1v1h-1zM2.7 17.9h1v1.5h-1zM6.6 9.6h2v1h-2zM4.9 9.8h1.5v1h-1.5zM18.3 20.0h1.5v1.5h-1.5zM10.0 8.9h2v1h-2zM4.6 4.9h1v1.5h-1zM6.3 11.7h1v1h-1zM7.3 4.2h1.5v1.5h-1.5zM13.1 22.0h1v1h-1zM19.9 18.2h2v1h-2zM9.7 3.3h2v1h-2zM5.4 22.7h2v1h-2zM3.8 14.2h1v1h-1zM13.1 12.8h1.5v1.5h-1.5zM2.0 20.2h2v1h-2zM14.5 22.0h1.5v1h-1.5zM4.0 19.7h2v1h-2zM11.4 2.9h1v1.5h-1zM8.5 6.8h1v1.5h-1zM2.0 21.9h1.5v1h-1.5zM15.6 21.1h1.5v1.5h-1.5zM19.2 16.3h1.5v1.5h-1.5zM9.0 4.7h1v1.5h-1zM12.6 12.1h1v1.5h-1zM18.1 22.7h1v1h-1zM18.3 17.3h1v1h-1zM12.1 8.8h1v1h-1zM17.7 11.4h1v1.5h-1zM13.9 8.6h1.5v1h-1.5zM3.2 3.2h2v1h-2zM8.4 11.6h1v1h-1zM20.1 8.6h1v1.5h-1zM4.0 9.5h1v1h-1zM19.7 10.5h1.5v1h-1.5zM17.9 22.4h2v1h-2zM9.7 21.8h1v1h-1zM21.9 1.6h2v1.5h-2zM4.5 19.2h2v1.5h-2zM20.7 4.4h1v1h-1zM1.8 22.4h1v1.5h-1zM16.9 4.1h1v1h-1zM2.1 5.7h1v1.5h-1zM8.2 13.0h1v1h-1zM20.2 8.8h2v1.5h-2zM13.5 20.9h2v1.5h-2zM4.2 4.3h1v1h-1zM17.4 14.4h1v1h-1zM4.4 14.6h1v1.5h-1zM2.8 16.0h2v1h-2zM19.6 2.3h1v1h-1zM2.4 3.2h2v1.5h-2zM2.1 20.7h1v1h-1zM8.2 22.4h1v1.5h-1zM7.2 12.2h2v1.5h-2zM20.8 16.4h1.5v1.5h-1.5zM19.8 5.5h2v1h-2zM10.0 9.6h1.5v1h-1.5zM15.3 10.4h1v1.5h-1zM7.7 3.7h1v1.5h-1zM14.7 9.1h1.5v1h-1.5zM21.3 5.8h1v1h-1zM19.6 4.6h1v1h-1zM16.0 22.9h2v1h-2zM10.1 8.8h1v1.5h-1zM9.0 8.4h2v1h-2zM15.9 9.5h1.5v1.5h-1.5z" fill="#4e4e0a" opacity=".8"/></svg>
<svg style="left:376px;top:736px" width="24" height="24" viewBox="0 0 24 24"><circle cx="12" cy="12" r="11.300" fill="#17181c" stroke="#159fee" stroke-width="1.300"/><path d="M16.800 8.200a6 6 0 1 0 .3 7" fill="none" stroke="#159fee" stroke-width="3" stroke-linecap="round" transform="skewX(-8) translate(1.800 0)"/><circle cx="19" cy="4.500" r="4.200" fill="#62c4ff"/><circle cx="17.600" cy="3.700" r=".7" fill="#fff"/><circle cx="20.400" cy="3.700" r=".7" fill="#fff"/><path d="M16.900 5.400q2.100 2 4.200 0" stroke="#fff" stroke-width=".9" fill="none"/></svg>
<svg style="left:425px;top:736px" width="24" height="24" viewBox="0 0 24 24"><rect x=".6" y="2.600" width="21.500" height="18.300" fill="#000" stroke="#9c9c9c" stroke-width="1"/><rect x="1.100" y="3" width="20.500" height="1.700" fill="#e6e6e6"/><text x="2.800" y="11" font-family="Liberation Sans,sans-serif" font-size="6" font-weight="700" fill="#c4c4c4">C:\</text><path d="M12.500 11.500h6.500" stroke="#f0f0f0" stroke-width="1.200"/></svg>
<svg style="left:474px;top:736px" width="24" height="24" viewBox="0 0 24 24"><defs><radialGradient id="lg" cx=".6" cy=".5" r=".6"><stop offset="0" stop-color="#35c0d8"/><stop offset="1" stop-color="#0b4a64"/></radialGradient></defs><circle cx="12.800" cy="12" r="9.600" fill="url(#lg)" stroke="#b8892c" stroke-width="1.500"/><path d="M3.500 7a10 10 0 0 0 0 10" stroke="#0d0f10" stroke-width="2.500" fill="none"/><path d="M5.500 .8h5.700v19h9.200l-2 3.400h-13.900l1.800-2.300v-17.800z" fill="#d8a53e" stroke="#6a4810" stroke-width=".8"/><path d="M7.500 2v19" stroke="#f3d27a" stroke-width="1.200"/></svg>
<svg style="left:523px;top:736px" width="24" height="24" viewBox="0 0 24 24"><path d="M12 0l10.800 5.500v12.700l-10.800 5.500-10.800-5.500v-12.700z" fill="#7c5630"/><path d="M12 0l10.800 5.500-10.800 5.500-10.800-5.500z" fill="#8a3a2a"/><path d="M12 1.300l8.300 4.200-8.300 4.200-8.300-4.200z" fill="#c99878"/><path d="M12 11v12.700l-10.800-5.500v-12.700z" fill="#94683a"/><path d="M12 11v12.700l10.800-5.500v-12.700z" fill="#6e4a28"/><path d="M4.500 7.200v12.700M8.500 9.200v12.700M15.500 9.200v12.700M19.500 7.200v12.700" stroke="#2e1e0e" stroke-width="1.400"/><path d="M1.200 9l10.800 5.500 10.800-5.500" stroke="#4a3218" stroke-width="1.200" fill="none"/><path d="M5.500 12.500l2 1v3l-2-1zM9.500 15l1.500 .8v3l-1.500-.8z" fill="#d8d8d8"/></svg>
<svg style="left:572px;top:736px" width="24" height="24" viewBox="0 0 24 24"><defs><linearGradient id="ng" x1="0" y1="0" x2="0" y2="1"><stop offset="0" stop-color="#f4f8d0"/><stop offset=".45" stop-color="#a6dc3c"/><stop offset="1" stop-color="#2fa81e"/></linearGradient></defs><path d="M1.500 .5h13l4.500 4.500v18.500h-17.500z" fill="#fdfdfd" stroke="#9a9a9a"/><path d="M14.500 .5v4.500h4.500" fill="#e6e6e6" stroke="#9a9a9a"/><path d="M3 2.200h11" stroke="#555" stroke-dasharray="1 1"/><rect x="2.500" y="9" width="15.500" height="13.500" fill="url(#ng)"/><path d="M6.500 6.500h-1.500v9h1.500" stroke="#111" stroke-width="1.300" fill="none"/><path d="M8.500 10.800h1.800M11.500 10.800h1.800" stroke="#222" stroke-width="1.400"/><path d="M21.500 2.500l-7.800 14.500" stroke="#f1a90a" stroke-width="2.400"/><path d="M13.900 16.600l-.9 1.900" stroke="#e8c89a" stroke-width="2"/><path d="M22.300 .8l-.7 1.400" stroke="#c02020" stroke-width="2.400"/></svg>
<div class="a" style="left:102px;top:740px;width:1px;height:16px;background:#6a6c6c;"></div>
<div class="a" style="left:105px;top:740px;width:1px;height:16px;background:#4a4c4c;"></div>
<div class="a" style="left:1099px;top:740px;width:1px;height:16px;background:#5a5c5c;"></div>
<div class="a" style="left:1102px;top:740px;width:1px;height:16px;background:#3a3c3c;"></div>
<svg style="left:1145px;top:740px" width="16" height="16" viewBox="0 0 16 16"><path d="M1.900 11l6.100-6.300 6.100 6.300" fill="none" stroke="#fff" stroke-width="1.250"/></svg>
<svg style="left:1169px;top:740px" width="16" height="16" viewBox="0 0 16 16"><path d="M.5 2.600H15.600V11.800H2.500" fill="none" stroke="#fff" stroke-width="1.100"/><path d="M.5 2.600v4.400h3.600v-4.400" fill="none" stroke="#fff" stroke-width="1"/><path d="M1.500 4.500l.8 .8 .8-.8" fill="none" stroke="#fff" stroke-width=".7"/><path d="M2.500 7v8.200M8.300 11.800v2.800M4.800 14.600h7.200" fill="none" stroke="#fff" stroke-width="1.100"/></svg>
<svg style="left:1193px;top:740px" width="16" height="16" viewBox="0 0 16 16"><path d="M.6 5.600h2.300l2.700-3v11.200l-2.700-3h-2.300z" fill="none" stroke="#fff" stroke-width="1.100"/><path d="M8 5.600q1.700 2.500 0 5M10.600 3.600q3.100 4.500 0 9M13.400 1.600q4.300 6.500 0 13" fill="none" stroke="#fff" stroke-width="1.150"/></svg>
<svg style="left:1324px;top:739px" width="24" height="24" viewBox="0 0 24 24"><path d="M1 1h16v13h-9.300l-2.700 3v-3h-4z" fill="#fff"/><path d="M4 4.500h10M4 7.500h10M4 10.500h6" stroke="#0e1011" stroke-width="1.100"/><circle cx="16.600" cy="16.300" r="8" fill="#2b2c2c" stroke="#7c7e7e" stroke-width=".9"/></svg>
<div class="a" style="left:1361px;top:728px;width:1px;height:40px;background:#6a6c6c;"></div>
<span class="tx" id="t0" style="left:23.5px;top:15.6px;font:400 12.3px 'Liberation Sans', sans-serif;color:#000;transform:translateY(-11.00px) scaleX(0.9907);">*D:\Minecraft\Server\permissions.yml - Notepad++</span>
<span class="tx" id="t1" style="left:8.3px;top:37.3px;font:400 12.3px 'Liberation Sans', sans-serif;color:#000;transform:translateY(-11.00px) scaleX(0.8725);">Tệp</span>
<span class="tx" id="t2" style="left:41.3px;top:37.3px;font:400 12.3px 'Liberation Sans', sans-serif;color:#000;transform:translateY(-11.00px) scaleX(0.9196);">Chỉnh sửa</span>
<span class="tx" id="t3" style="left:108.5px;top:37.3px;font:400 12.3px 'Liberation Sans', sans-serif;color:#000;transform:translateY(-11.00px) scaleX(0.9446);">Tìm</span>
<span class="tx" id="t4" style="left:143px;top:37.3px;font:400 12.3px 'Liberation Sans', sans-serif;color:#000;transform:translateY(-11.00px) scaleX(0.9329);">Xem</span>
<span class="tx" id="t5" style="left:181px;top:37.3px;font:400 12.3px 'Liberation Sans', sans-serif;color:#000;transform:translateY(-11.00px) scaleX(0.9651);">Mã hóa</span>
<span class="tx" id="t6" style="left:235px;top:37.3px;font:400 12.3px 'Liberation Sans', sans-serif;color:#000;transform:translateY(-11.00px) scaleX(0.9939);">Ngôn ngữ</span>
<span class="tx" id="t7" style="left:304px;top:37.3px;font:400 12.3px 'Liberation Sans', sans-serif;color:#000;transform:translateY(-11.00px) scaleX(0.9518);">Thiết lập</span>
<span class="tx" id="t8" style="left:363.4px;top:37.3px;font:400 12.3px 'Liberation Sans', sans-serif;color:#000;transform:translateY(-11.00px) scaleX(0.9610);">Tools</span>
<span class="tx" id="t9" style="left:405.6px;top:37.3px;font:400 12.3px 'Liberation Sans', sans-serif;color:#000;transform:translateY(-11.00px) scaleX(0.9599);">Macro</span>
<span class="tx" id="t10" style="left:453.4px;top:37.3px;font:400 12.3px 'Liberation Sans', sans-serif;color:#000;transform:translateY(-11.00px) scaleX(0.9262);">Chạy</span>
<span class="tx" id="t11" style="left:494.5px;top:37.3px;font:400 12.3px 'Liberation Sans', sans-serif;color:#000;transform:translateY(-11.00px) scaleX(0.9543);">Plugins</span>
<span class="tx" id="t12" style="left:547.5px;top:37.3px;font:400 12.3px 'Liberation Sans', sans-serif;color:#000;transform:translateY(-11.00px) scaleX(0.8722);">Cửa sổ</span>
<span class="tx" id="t13" style="left:597.2px;top:37.3px;font:400 12.3px 'Liberation Sans', sans-serif;color:#000;transform:translateY(-11.00px) scaleX(0.6868);">?</span>
<span class="tx" id="t14" style="left:1352px;top:37.3px;font:400 12.3px 'Liberation Sans', sans-serif;color:#000;transform:translateY(-11.00px) scaleX(0.8899);">X</span>
<span class="tx" id="t15" style="left:2.2px;top:721.8px;font:400 12.3px 'Liberation Sans', sans-serif;color:#000;transform:translateY(-11.00px) scaleX(0.9804);">YAML Ain't Markup Language</span>
<span class="tx" id="t16" style="left:631px;top:721.8px;font:400 12.3px 'Liberation Sans', sans-serif;color:#000;transform:translateY(-11.00px) scaleX(0.9334);">length : 460</span>
<span class="tx" id="t17" style="left:703px;top:721.8px;font:400 12.3px 'Liberation Sans', sans-serif;color:#000;transform:translateY(-11.00px) scaleX(0.9143);">lines : 27</span>
<span class="tx" id="t18" style="left:830.5px;top:721.8px;font:400 12.3px 'Liberation Sans', sans-serif;color:#000;transform:translateY(-11.00px) scaleX(0.8907);">Ln : 27</span>
<span class="tx" id="t19" style="left:877px;top:721.8px;font:400 12.3px 'Liberation Sans', sans-serif;color:#000;transform:translateY(-11.00px) scaleX(0.8964);">Col : 34</span>
<span class="tx" id="t20" style="left:928px;top:721.8px;font:400 12.3px 'Liberation Sans', sans-serif;color:#000;transform:translateY(-11.00px) scaleX(0.8505);">Sel : 0 | 0</span>
<span class="tx" id="t21" style="left:1090.5px;top:721.8px;font:400 12.3px 'Liberation Sans', sans-serif;color:#000;transform:translateY(-11.00px) scaleX(0.9172);">Windows (CR LF)</span>
<span class="tx" id="t22" style="left:1200.5px;top:721.8px;font:400 12.3px 'Liberation Sans', sans-serif;color:#000;transform:translateY(-11.00px) scaleX(0.9040);">UTF-8</span>
<span class="tx" id="t23" style="left:1320.5px;top:721.8px;font:400 12.3px 'Liberation Sans', sans-serif;color:#000;transform:translateY(-11.00px) scaleX(0.8537);">INS</span>
<span class="tx" id="t24" style="left:21.7px;top:87.0px;font:400 12.4px 'Liberation Sans', sans-serif;color:#808080;transform:translateY(-11.00px) scaleX(0.8476);">bukkit.yml</span>
<span class="tx" id="t25" style="left:109.8px;top:87.0px;font:400 12.4px 'Liberation Sans', sans-serif;color:#808080;transform:translateY(-11.00px) scaleX(0.8418);">Minecraftpaper.jar</span>
<span class="tx" id="t26" style="left:233.8px;top:87.0px;font:400 12.4px 'Liberation Sans', sans-serif;color:#808080;transform:translateY(-11.00px) scaleX(0.8543);">usercache.json</span>
<span class="tx" id="t27" style="left:346px;top:87.0px;font:400 12.4px 'Liberation Sans', sans-serif;color:#808080;transform:translateY(-11.00px) scaleX(0.8246);">config.yml</span>
<span class="tx" id="t28" style="left:432.7px;top:87.0px;font:400 12.4px 'Liberation Sans', sans-serif;color:#808080;transform:translateY(-11.00px) scaleX(0.8347);">run.bat</span>
<span class="tx" id="t29" style="left:505.7px;top:87.0px;font:400 12.4px 'Liberation Sans', sans-serif;color:#808080;transform:translateY(-11.00px) scaleX(0.8375);">server.properties</span>
<span class="tx" id="t30" style="left:623.7px;top:87.0px;font:400 12.4px 'Liberation Sans', sans-serif;color:#808080;transform:translateY(-11.00px) scaleX(0.8139);">spigot.yml</span>
<span class="tx" id="t31" style="left:710.2px;top:87.0px;font:400 12.4px 'Liberation Sans', sans-serif;color:#808080;transform:translateY(-11.00px) scaleX(0.8448);">SkinsRestorer.jar</span>
<span class="tx" id="t32" style="left:829.8px;top:87.0px;font:400 12.4px 'Liberation Sans', sans-serif;color:#000;transform:translateY(-11.00px) scaleX(0.8038);">permissions.yml</span>
<span class="tx" id="t33" style="left:1116.7px;top:749.8px;font:400 12px 'Liberation Sans', sans-serif;color:#fff;transform:translateY(-11.00px) scaleX(0.8337);">EN</span>
<span class="tx" id="t34" style="left:1219.7px;top:751.8px;font:400 12px 'Liberation Sans', sans-serif;color:#fff;transform:translateY(-11.00px) scaleX(0.8456);">ENG</span>
<span class="tx" id="t35" style="left:1258px;top:743.2px;font:400 12px 'Liberation Sans', sans-serif;color:#fff;transform:translateY(-11.00px) scaleX(0.9231);">11:01 PM</span>
<span class="tx" id="t36" style="left:1254.7px;top:760.7px;font:400 12px 'Liberation Sans', sans-serif;color:#fff;transform:translateY(-11.00px) scaleX(0.9833);">8/18/2019</span>
<span class="tx" id="t37" style="left:1337.4px;top:758.7px;font:700 11.5px 'Liberation Sans', sans-serif;color:#fff;transform:translateY(-10.00px) scaleX(0.9834);">2</span>
</body></html>
